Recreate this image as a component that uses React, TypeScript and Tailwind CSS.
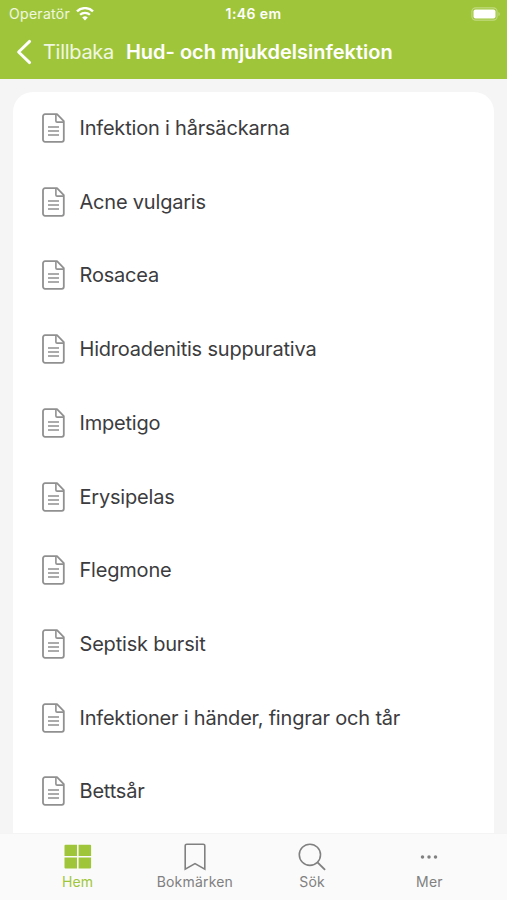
import type { ReactNode } from "react"

const articles = [
  "Infektion i hårsäckarna",
  "Acne vulgaris",
  "Rosacea",
  "Hidroadenitis suppurativa",
  "Impetigo",
  "Erysipelas",
  "Flegmone",
  "Septisk bursit",
  "Infektioner i händer, fingrar och tår",
  "Bettsår",
]

function WifiIcon() {
  return (
    <svg width="18" height="14" viewBox="0 0 18 14" fill="none" stroke="currentColor" aria-hidden="true">
      <path d="M1 4.4a11.4 11.4 0 0 1 16 0" strokeWidth="2.4" />
      <path d="M4.1 7.8a7 7 0 0 1 9.8 0" strokeWidth="2.3" />
      <path d="M9 13.4 6.2 10.5a4 4 0 0 1 5.6 0z" fill="currentColor" stroke="none" />
    </svg>
  )
}

function BatteryIcon() {
  return (
    <svg width="30" height="14" viewBox="0 0 30 14" fill="none" aria-hidden="true">
      <rect x="0.9" y="0.9" width="25.2" height="12.2" rx="3.8" stroke="#fff" strokeOpacity="0.35" strokeWidth="1.1" />
      <rect x="2.5" y="2.5" width="22" height="9" rx="2" fill="#fff" />
      <path d="M27.5 4.9c1.6.6 1.6 3.6 0 4.2z" fill="#fff" fillOpacity="0.4" />
    </svg>
  )
}

function BackIcon() {
  return (
    <svg width="16" height="26" viewBox="0 0 16 26" fill="none" stroke="currentColor" strokeWidth="2.9" aria-hidden="true">
      <path d="M13.6 2.4 2.6 13l11 10.6" strokeLinecap="round" strokeLinejoin="round" />
    </svg>
  )
}

function DocumentIcon() {
  return (
    <svg width="23" height="30" viewBox="0 0 23 30" fill="none" stroke="currentColor" strokeWidth="1.8" aria-hidden="true">
      <path
        d="M3 1.2h12l6.8 7v18.6a2 2 0 0 1-2 2H3a2 2 0 0 1-2-2V3.2a2 2 0 0 1 2-2z"
        strokeLinejoin="round"
      />
      <path d="M13.9 1.2v6.7A1.2 1.2 0 0 0 15.1 9.1h6.5" strokeWidth="1.6" />
      <path d="M6 14h11M6 18h11M6 22h11" strokeWidth="1.5" />
    </svg>
  )
}

function GridIcon() {
  return (
    <svg width="28" height="25" viewBox="0 0 28 25" fill="currentColor" aria-hidden="true">
      <path d="M1.5.8H13v11.1H.5V1.8a1 1 0 0 1 1-1zM14.6.8h11.5a1 1 0 0 1 1 1v10.1H14.6zM.5 13.5H13v11.1H1.5a1 1 0 0 1-1-1zM14.6 13.5h12.5v10.1a1 1 0 0 1-1 1H14.6z" />
    </svg>
  )
}

function BookmarkIcon() {
  return (
    <svg width="22" height="28" viewBox="0 0 22 28" fill="none" stroke="currentColor" strokeWidth="1.6" aria-hidden="true">
      <path d="M1.2 26.2V2.8A1.6 1.6 0 0 1 2.8 1.2h16.4a1.6 1.6 0 0 1 1.6 1.6v23.4L11 20.6z" />
    </svg>
  )
}

function SearchIcon() {
  return (
    <svg width="28" height="28" viewBox="0 0 28 28" fill="none" stroke="currentColor" strokeWidth="1.6" aria-hidden="true">
      <circle cx="11.9" cy="11.8" r="10.6" />
      <path d="m19.5 19.3 7.6 7.6" strokeWidth="1.9" />
    </svg>
  )
}

function MoreIcon() {
  return (
    <svg width="18" height="4" viewBox="0 0 18 4" fill="currentColor" aria-hidden="true">
      <circle cx="2.5" cy="2" r="1.75" />
      <circle cx="9" cy="2" r="1.75" />
      <circle cx="15.5" cy="2" r="1.75" />
    </svg>
  )
}

interface TabProps {
  label: string
  icon: ReactNode
  active?: boolean
}

function Tab({ label, icon, active }: TabProps) {
  return (
    <button
      type="button"
      className={`flex flex-1 flex-col items-center ${active ? "text-[#9fc63b]" : "text-[#808080]"}`}
    >
      <span className="mt-2 flex h-[29px] items-center">{icon}</span>
      <span className="mt-0.5 text-sm leading-[18px] tracking-[0.2px]">{label}</span>
    </button>
  )
}

export default function App() {
  return (
    <div className="flex h-[900px] flex-col overflow-hidden bg-[#f5f5f6] font-['Inter',sans-serif]">
      <header className="h-[79px] shrink-0 bg-[#9fc63b] text-white">
        <div className="grid h-[27px] grid-cols-3 items-center pr-1.5 pl-[9px] text-sm">
          <div className="flex items-center gap-1.5 text-white/85">
            <span className="tracking-[0.3px]">Operatör</span>
            <span className="text-white">
              <WifiIcon />
            </span>
          </div>
          <span className="pr-[3px] text-center font-semibold tracking-[0.4px]">1:46 em</span>
          <span className="flex justify-end">
            <BatteryIcon />
          </span>
        </div>
        <div className="flex h-[50px] items-center pl-4 text-xl">
          <BackIcon />
          <span className="ml-[11px] tracking-[-0.3px] text-white/85">Tillbaka</span>
          <h1 className="ml-3 font-semibold">Hud- och mjukdelsinfektion</h1>
        </div>
      </header>

      <main className="min-h-0 flex-1 overflow-hidden px-[13px] pt-[13px]">
        <ul className="h-full rounded-t-[20px] bg-white">
          {articles.map((title) => (
            <li key={title} className="flex h-[73.7px] items-center pr-5 pb-[1.5px] pl-[29px]">
              <span className="text-[#909090]">
                <DocumentIcon />
              </span>
              <span className="ml-[14.5px] text-xl tracking-[-0.2px] text-[#3c3c3e]">{title}</span>
            </li>
          ))}
        </ul>
      </main>

      <nav className="flex h-[67px] shrink-0 border-[#f4f4f4] border-t bg-[#fafafa] px-[19px]">
        <Tab label="Hem" icon={<GridIcon />} active />
        <Tab label="Bokmärken" icon={<BookmarkIcon />} />
        <Tab label="Sök" icon={<SearchIcon />} />
        <Tab label="Mer" icon={<MoreIcon />} />
      </nav>
    </div>
  )
}
